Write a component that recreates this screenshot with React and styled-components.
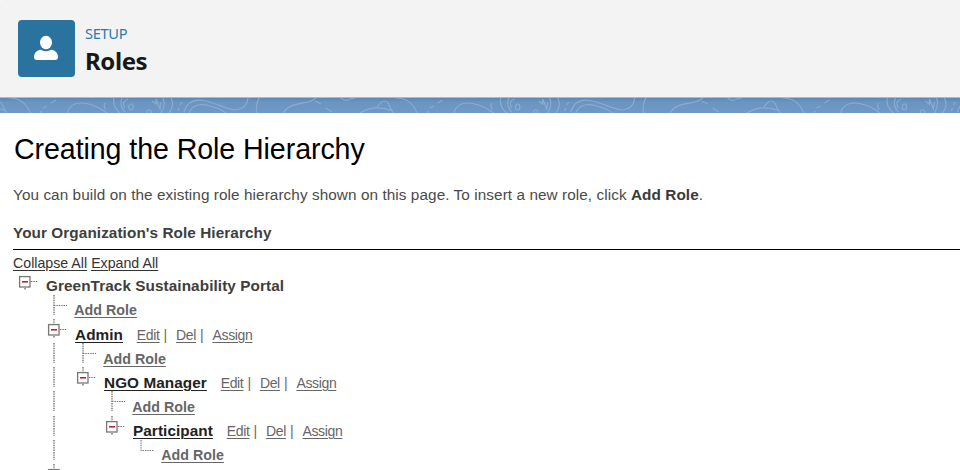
import React from "react";
import styled, { createGlobalStyle } from "styled-components";

const GlobalStyle = createGlobalStyle`
  body { margin: 0; background: #fff; overflow: hidden; }
  * { box-sizing: border-box; }
`;

const Page = styled.div`
  height: 470px;
  overflow: hidden;
  font-family: "Liberation Sans", Arial, sans-serif;
  color: #3e3e3c;
`;

const Header = styled.header`
  display: flex;
  height: 98px;
  padding: 20px 0 0 18px;
  background: #f3f3f3;
  border-bottom: 1px solid #b4b9c0;
  border-top-left-radius: 2px;
`;

const IconTile = styled.div`
  display: flex;
  width: 57px;
  height: 57px;
  border-radius: 4px;
  background: #2a739e;
`;

const Titles = styled.div`
  display: flex;
  flex-direction: column;
  padding: 3px 0 0 10px;
  font-family: "Noto Sans", "Open Sans", sans-serif;
`;

const Eyebrow = styled.span`
  font-size: 14.6px;
  line-height: 21px;
  letter-spacing: -0.3px;
  color: #2b7ab0;
`;

const Title = styled.h1`
  margin: 0;
  font-size: 24px;
  line-height: 34px;
  font-weight: 700;
  letter-spacing: -0.4px;
  color: #181818;
`;

const Band = styled.div`
  height: 15px;
  background: linear-gradient(#5f87b4, #6a94c2 4px, #7099c6);
  svg { display: block; }
`;

const Content = styled.main`
  padding-left: 13px;
`;

const Heading = styled.h2`
  margin: 0;
  padding: 18px 0 0 1px;
  font-size: 28.6px;
  line-height: 36px;
  font-weight: 400;
  letter-spacing: -0.08px;
  color: #000;
`;

const Intro = styled.p`
  margin: 17px 0 0;
  font-size: 15.3px;
  line-height: 22px;
  letter-spacing: 0.08px;
  color: #4a4a4a;
  b { color: #3a3a3a; }
`;

const SectionTitle = styled.h3`
  margin: 15px 0 0;
  height: 29px;
  border-bottom: 1px solid #000;
  font-size: 15.3px;
  line-height: 23px;
  letter-spacing: 0.08px;
  color: #3e3e3c;
`;

const TreeActions = styled.div`
  display: flex;
  gap: 4px;
  height: 21px;
  padding-top: 5px;
  font-size: 14.2px;
  line-height: 17px;
`;

const Link = styled.a`
  color: ${(p) => p.$color || "#333"};
  text-decoration: underline;
  text-decoration-thickness: 1px;
  text-underline-offset: 2px;
`;

const Tree = styled.div`
  margin-left: -3px;
`;

const Row = styled.div`
  display: flex;
  height: 24.1px;
`;

const CellSvg = styled.svg`
  display: block;
  flex: none;
  width: 29px;
  height: 20px;
`;

const Label = styled.div`
  display: flex;
  align-items: baseline;
  padding: 5.35px 0 0 ${(p) => (p.$small ? 6.3 : 7)}px;
  font-size: ${(p) => (p.$small ? 14.25 : 15.3)}px;
  letter-spacing: ${(p) => (p.$small ? 0 : 0.08)}px;
  line-height: 20px;
  font-weight: 700;
  white-space: pre;
`;

const Actions = styled.span`
  display: flex;
  margin-left: 13.8px;
  font-size: 14px;
  letter-spacing: -0.35px;
  font-weight: 400;
  color: #666;
`;

const Separator = styled.span`
  width: 16.5px;
  padding-left: 4px;
`;

const dots = { stroke: "#707070", strokeWidth: 1.4, strokeDasharray: "1.4 1" };

function Cell({ kind }) {
  return (
    <CellSvg viewBox="0 0 29 20">
      {(kind === "line" || kind === "tee") && <path d="M15 0V20" {...dots} />}
      {kind === "tee" && <path d="M15 10.5H28" {...dots} strokeWidth="1" />}
      {kind === "end" && <path d="M15 0V10.5H28" fill="none" {...dots} strokeWidth="1.1" />}
      {(kind === "node" || kind === "root") && (
        <>
          {kind === "node" && <path d="M15 0V5" {...dots} />}
          <path d="M21 10.5H28" {...dots} strokeWidth="1.1" />
          <path d="M15 17V19" {...dots} />
          <rect x="9.6" y="5.6" width="10.4" height="10.4" fill="#fff" stroke="#777" strokeWidth="1.3" />
          <path d="M12 10.8H18" stroke="#b8132f" strokeWidth="1.5" />
        </>
      )}
    </CellSvg>
  );
}

const rows = [
  { cells: ["root"], name: "GreenTrack Sustainability Portal", root: true },
  { cells: ["", "tee"] },
  { cells: ["", "node"], name: "Admin" },
  { cells: ["", "line", "tee"] },
  { cells: ["", "line", "node"], name: "NGO Manager" },
  { cells: ["", "line", "", "tee"] },
  { cells: ["", "line", "", "node"], name: "Participant" },
  { cells: ["", "line", "", "", "end"] },
  { cells: ["", "node"], blank: true },
];

function RoleLabel({ row }) {
  if (row.blank) return null;
  if (row.root) return <Label>{row.name}</Label>;
  if (!row.name) {
    return <Label $small><Link href="#" $color="#666">Add Role</Link></Label>;
  }
  return (
    <Label>
      <Link href="#" $color="#222">{row.name}</Link>
      <Actions>
        <Link href="#" $color="#666">Edit</Link><Separator>|</Separator>
        <Link href="#" $color="#666">Del</Link><Separator>|</Separator>
        <Link href="#" $color="#666">Assign</Link>
      </Actions>
    </Label>
  );
}

function Pattern() {
  return (
    <svg width="960" height="15">
      <defs>
        <g id="contours" fill="none">
          <path d="M43 10L47 8M51 5L56 2M40 15L42 13" />
          <path d="M67 15C71 3 83 4 92 7S102 12 107 15M105 5Q103 8 106 12" />
          <path d="M114 0Q112 8 120 15M122 0Q119 8 125 14M128 1Q121 3 125 10" />
          <ellipse cx="131" cy="9" rx="2.2" ry="3" />
          <path d="M147 15Q147 11 150 12Q152 13 151 15M152 3L156 6L156 1L160 11L161 4M163 0Q166 7 161 15M171 0Q175 8 169 15" />
          <path d="M182 4L180 7M179 10L178 13" />
          <path d="M184 14C188 1 198 1 206 3C219 6 227 12 236 12Q247 11 248 0M189 15C193 5 202 6 210 8Q221 11 226 15M259 0Q255 8 257 15" />
          <path d="M283 15C291 3 305 7 313 2L316 0M315 3L321 6M326 10L332 14" />
          <path d="M341 0Q345 4 350 1L355 0M360 15C371 8 383 9 393 13M377 9Q386 -3 390 9L393 15M396 0Q411 0 417 15" />
        </g>
      </defs>
      <g stroke="#98b7d9" strokeWidth="1.2" opacity=".68">
        <use href="#contours" x="-386.7" />
        <use href="#contours" />
        <use href="#contours" x="386.7" />
        <use href="#contours" x="773.4" />
      </g>
    </svg>
  );
}

export default function App() {
  return (
    <Page>
      <GlobalStyle />
      <Header>
        <IconTile>
          <svg width="57" height="57" viewBox="0 0 57 57" fill="#fff">
            <ellipse cx="28" cy="22.5" rx="6" ry="6.7" />
            <path d="M21 30Q23 29.5 24 30.2Q28 32.5 32 30.2Q33 29.5 35 30Q40 32 40 37Q40 40 37 40H19Q16 40 16 37Q16 32 21 30Z" />
          </svg>
        </IconTile>
        <Titles>
          <Eyebrow>SETUP</Eyebrow>
          <Title>Roles</Title>
        </Titles>
      </Header>
      <Band><Pattern /></Band>
      <Content>
        <Heading>Creating the Role Hierarchy</Heading>
        <Intro>You can build on the existing role hierarchy shown on this page. To insert a new role, click <b>Add Role</b>.</Intro>
        <SectionTitle>Your Organization's Role Hierarchy</SectionTitle>
        <TreeActions><Link href="#">Collapse All</Link><Link href="#">Expand All</Link></TreeActions>
        <Tree>
          {rows.map((row, i) => (
            <Row key={i}>
              {row.cells.map((kind, j) => <Cell key={j} kind={kind} />)}
              <RoleLabel row={row} />
            </Row>
          ))}
        </Tree>
      </Content>
    </Page>
  );
}
